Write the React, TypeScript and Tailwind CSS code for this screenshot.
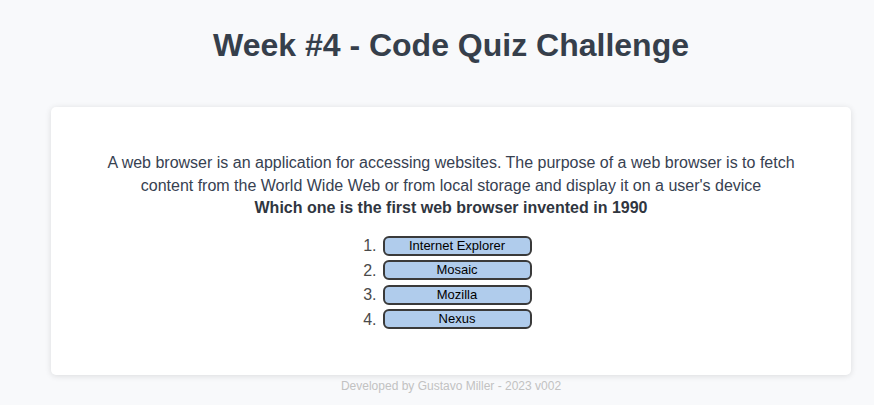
const CHOICES = ['Internet Explorer', 'Mosaic', 'Mozilla', 'Nexus'];

export default function App() {
  return (
    <div className="min-h-screen bg-[#f8f9fb] pl-[28px] font-['Liberation_Sans',Arial,sans-serif] text-[#374151]">
      {/* Header */}
      <header className="pt-[27px] pb-[43px] text-center">
        <h1 className="text-[32px] font-bold leading-[37px] text-[#363f4b]">Week #4 - Code Quiz Challenge</h1>
      </header>

      {/* Quiz card */}
      <main className="mx-auto w-[800px] rounded-[5px] bg-white pt-[45px] pb-[46px] shadow-[0_1px_6px_rgba(0,0,0,0.12)]">
        <div className="text-center text-[16px] leading-[22.5px]">
          <p className="mx-auto max-w-[700px]">
            A web browser is an application for accessing websites. The purpose of a web browser is to fetch content from the World Wide Web or from local storage and display it on a user's device
          </p>
          <p className="font-bold text-[#30363f]">Which one is the first web browser invented in 1990</p>
        </div>

        <ol className="mt-[16px] flex flex-col items-center gap-[4.5px]">
          {CHOICES.map((choice, i) => (
            <li key={choice} className="flex items-center pr-[12px]">
              <span className="w-[24px] pr-[6px] text-right text-[16px] leading-[19px] text-[#4a4a4a]">{i + 1}.</span>
              <button className="h-[20px] w-[149px] rounded-[6px] border-2 border-[#3a3a3a] bg-[#b0ccec] text-[13px] leading-[16px] text-black">
                {choice}
              </button>
            </li>
          ))}
        </ol>
      </main>

      {/* Footer */}
      <footer className="pt-[4px] text-center text-[12px] leading-[14px] text-[#c2c2c2]">
        Developed by Gustavo Miller - 2023 v002
      </footer>
    </div>
  );
}
